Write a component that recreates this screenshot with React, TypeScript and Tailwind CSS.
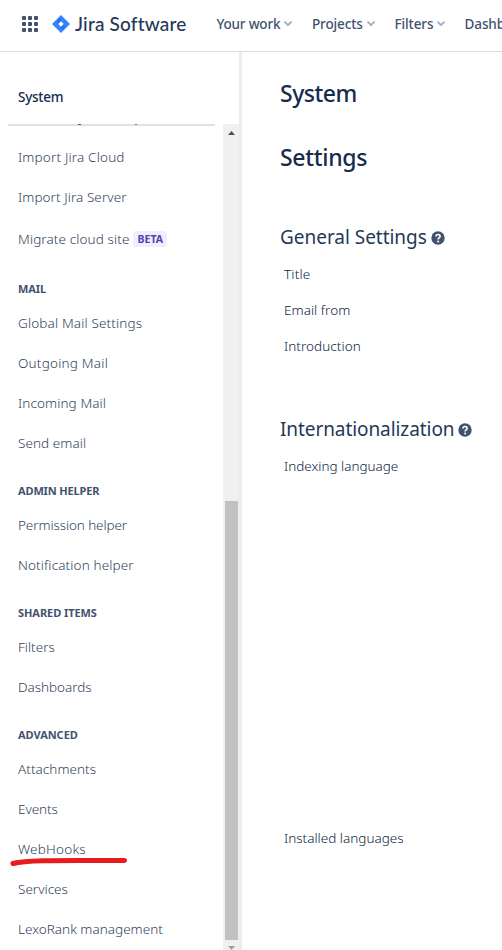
import React from "react";

const uiFont = "font-['Noto_Sans','Open_Sans',sans-serif]";

type Item = { label: string; w: string; beta?: boolean };
type Group = { title?: string; w?: string; items: Item[] };

const groups: Group[] = [
  {
    items: [
      { label: "Import Jira Cloud", w: "tracking-[0.17px]" },
      { label: "Import Jira Server", w: "tracking-[0.07px]" },
      { label: "Migrate cloud site", w: "tracking-[0.11px]", beta: true },
    ],
  },
  {
    title: "MAIL",
    w: "tracking-[-0.1px]",
    items: [
      { label: "Global Mail Settings", w: "tracking-[0.15px]" },
      { label: "Outgoing Mail", w: "tracking-[0.22px]" },
      { label: "Incoming Mail", w: "tracking-[0.1px]" },
      { label: "Send email", w: "tracking-[0.07px]" },
    ],
  },
  {
    title: "ADMIN HELPER",
    w: "tracking-[-0.14px]",
    items: [
      { label: "Permission helper", w: "tracking-[-0.1px]" },
      { label: "Notification helper", w: "tracking-[0.13px]" },
    ],
  },
  {
    title: "SHARED ITEMS",
    w: "tracking-[-0.06px]",
    items: [
      { label: "Filters", w: "tracking-[0px]" },
      { label: "Dashboards", w: "tracking-[-0.05px]" },
    ],
  },
  {
    title: "ADVANCED",
    w: "tracking-[-0.04px]",
    items: [
      { label: "Attachments", w: "tracking-[0.05px]" },
      { label: "Events", w: "tracking-[-0.08px]" },
      { label: "WebHooks", w: "tracking-[0.22px]" },
      { label: "Services", w: "tracking-[0.01px]" },
      { label: "LexoRank management", w: "tracking-[0.02px]" },
    ],
  },
];

function Chevron() {
  return (
    <svg width="8" height="6" viewBox="0 0 8 6" fill="none" className="shrink-0">
      <path d="M1 1.2 4 4.2 7 1.2" stroke="#A5ADBA" strokeWidth="1.9" strokeLinecap="round" strokeLinejoin="round" />
    </svg>
  );
}

function Help() {
  return (
    <svg width="14" height="14" viewBox="0 0 14 14" fill="none" className="mt-0.5 shrink-0">
      <circle cx="7" cy="7" r="6.7" fill="#42526E" />
      <path d="M5 5.6C5 4.2 5.9 3.5 7 3.5s2.100.7 2.100 1.900C9.100 6.800 7.100 6.800 7.100 8.500" stroke="#fff" strokeWidth="1.600" />
      <circle cx="7.100" cy="10.400" r="1" fill="#fff" />
    </svg>
  );
}

function Header() {
  return (
    <header className="flex h-[52px] shrink-0 items-center overflow-hidden border-b border-[#dcdde1] pb-[3px] pl-[22px] whitespace-nowrap">
      <svg width="16" height="16" viewBox="0 0 16 16" fill="#42526E" className="shrink-0">
        {[0, 6, 12].map((y) =>
          [0, 6, 12].map((x) => <rect key={`${x}-${y}`} x={x} y={y} width="4" height="4" rx="1" />),
        )}
      </svg>
      <svg width="18" height="18" viewBox="0 0 18 18" className="ml-[14px] shrink-0">
        <path d="M9 0 18 9 9 18 0 9Z" fill="#3484FF" />
        <path d="M9 3.500v3L6.500 9 5 7.500C5 5.500 7 3.500 9 3.500Z" fill="#2470EA" />
        <path d="M9 14.500v-3L11.500 9 13 10.500C13 12.500 11 14.500 9 14.500Z" fill="#2470EA" />
        <path d="M9 6.300 11.700 9 9 11.700 6.300 9Z" fill="#fff" />
      </svg>
      <span className="ml-[5px] w-[113px] shrink-0 font-['Lato','Open_Sans',sans-serif] text-[19px] font-medium tracking-[0.18px] text-[#253858]">
        Jira Software
      </span>
      <nav className="ml-[28.5px] flex shrink-0 text-[13.500px] font-medium text-[#42526E]">
        <span className="flex w-[95.5px] items-center gap-1 tracking-[-0.2px]">Your work <Chevron /></span>
        <span className="flex w-[82.5px] items-center gap-1 tracking-[-0.13px]">Projects <Chevron /></span>
        <span className="flex w-[70px] items-center gap-1 tracking-[-0.1px]">Filters <Chevron /></span>
        <span className="tracking-[-0.1px]">Dashboards</span>
      </nav>
    </header>
  );
}

function Sidebar() {
  return (
    <aside className="flex w-[242px] shrink-0 flex-col border-r-[3px] border-[#ebecf0]">
      <div className="flex h-[72px] shrink-0 items-center pt-[18px] pl-[18px] text-[13.500px] font-medium tracking-[-0.25px] text-[#172B4D]">
        System
      </div>
      <div className="flex min-h-0 flex-1">
        <div className="w-[223px]">
          <div className="ml-2 flex h-0.5 w-[207px] items-start bg-[#dfe1e6]">
            <i className="ml-[70px] h-px w-[3px] bg-[#42629a]" />
            <i className="ml-[54px] h-px w-0.5 bg-[#5484b8]" />
          </div>
          <div className="pt-[11px]">
            {groups.map((g, i) => (
              <section key={i}>
                {g.title && (
                  <h3 className={`h-[42px] pt-5 pl-[18px] text-[11px] leading-4 font-bold text-[#42526E] ${g.w}`}>{g.title}</h3>
                )}
                {g.items.map((it) => (
                  <div
                    key={it.label}
                    className={`relative flex items-center pl-[18px] text-[13.500px] font-light whitespace-nowrap text-[#2f3f5c] ${it.beta ? "h-11" : "h-10"}`}
                  >
                    <span className={it.w}>{it.label}</span>
                    {it.beta && (
                      <span className="ml-[3.5px] rounded-[3px] bg-[#EAE6FF]/70 px-[4.5px] text-[10.500px] leading-4 font-bold text-[#5243AA]">
                        BETA
                      </span>
                    )}
                    {it.label === "WebHooks" && (
                      <svg width="120" height="12" viewBox="0 0 120 12" fill="none" className="absolute top-[26px] left-[9px]">
                        <path d="M4 8.500C18 4.800 46 5.300 115.500 5.500" stroke="#E81C1E" strokeWidth="5" strokeLinecap="round" />
                      </svg>
                    )}
                  </div>
                ))}
              </section>
            ))}
          </div>
        </div>
        <div className="flex w-4 shrink-0 flex-col items-center bg-[#f0f0f0]">
          <svg width="16" height="16" viewBox="0 0 16 16" className="shrink-0"><path d="M5 11 8.500 7 12 11Z" fill="#505050" /></svg>
          <div className="mt-[361px] h-[439px] w-[13px] shrink-0 bg-[#c1c1c1]" />
          <svg width="16" height="10" viewBox="0 0 16 10" className="shrink-0"><path d="M5 6 8.500 10 12 6Z" fill="#a0a0a0" /></svg>
        </div>
      </div>
    </aside>
  );
}

function Row({ children, className = "" }: { children: React.ReactNode; className?: string }) {
  return <div className={`h-9 pl-1 text-[13.500px] leading-9 font-light text-[#0c1e3e] ${className}`}>{children}</div>;
}

export default function App() {
  return (
    <div className={`flex h-[950px] w-[502px] flex-col overflow-hidden bg-white ${uiFont}`}>
      <Header />
      <div className="flex min-h-0 flex-1">
        <Sidebar />
        <main className="flex-1 pt-[25px] pl-[38px] whitespace-nowrap text-[#172B4D]">
          <h1 className="h-8 text-[23px] leading-8 font-medium tracking-[-0.5px]">System</h1>
          <h1 className="mt-8 h-8 text-[23px] leading-8 font-medium tracking-[-0.3px]">Settings</h1>
          <h2 className="mt-[50px] flex h-[28px] items-center gap-1 text-[19px] font-normal tracking-[-0.03px] text-[#253858]">
            General Settings <Help />
          </h2>
          <div className="mt-[5px]">
            <Row className="tracking-[0.2px]">Title</Row>
            <Row className="tracking-[0.05px]">Email from</Row>
            <Row className="tracking-[0.05px]">Introduction</Row>
          </div>
          <h2 className="mt-[51px] flex h-[28px] items-center gap-1 text-[19px] font-normal tracking-[-0.08px] text-[#253858]">
            Internationalization <Help />
          </h2>
          <div className="mt-[5px]">
            <Row className="tracking-[-0.01px]">Indexing language</Row>
            <Row className="mt-[336px] tracking-[0.01px]">Installed languages</Row>
          </div>
        </main>
      </div>
    </div>
  );
}
